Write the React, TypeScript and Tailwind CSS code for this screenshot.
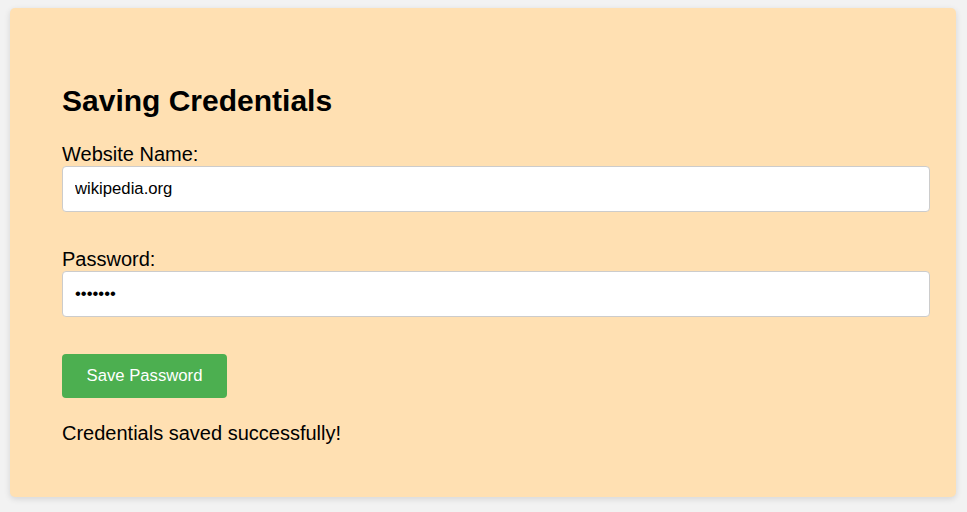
export default function App() {
  return (
    <div
      className="min-h-[512px] bg-[#f2f2f2] pt-[8px] pl-[10px] pr-[11px] pb-[15px]"
      style={{ fontFamily: '"Liberation Sans", Arial, sans-serif' }}
    >
      {/* Card */}
      <div className="w-[946px] rounded-[5px] bg-[#ffe0b2] pl-[52px] pr-[26px] pt-[75px] pb-[52px] shadow-[0_2px_6px_rgba(0,0,0,0.12)]">
        <h2 className="text-[30px] leading-[36px] font-bold text-black">Saving Credentials</h2>

        <form className="mt-[23px]" onSubmit={(e) => e.preventDefault()}>
          <label className="block text-[20px] leading-[24px] text-black">Website Name:</label>
          <input
            type="text"
            defaultValue="wikipedia.org"
            className="block w-full h-[46px] px-[12px] rounded-[4px] border border-[#cccccc] bg-white text-[16.7px] text-black outline-none"
          />

          <label className="block mt-[35px] text-[20px] leading-[24px] text-black">Password:</label>
          <input
            type="password"
            defaultValue="1234567"
            className="block w-full h-[46px] px-[12px] rounded-[4px] border border-[#cccccc] bg-white text-[16.7px] text-black outline-none"
          />

          <button
            type="submit"
            className="mt-[37px] h-[44px] w-[165px] rounded-[4px] bg-[#4caf50] text-[16.7px] text-white"
          >
            Save Password
          </button>
        </form>

        <p className="mt-[23px] text-[20px] leading-[24px] text-black">Credentials saved successfully!</p>
      </div>
    </div>
  );
}
